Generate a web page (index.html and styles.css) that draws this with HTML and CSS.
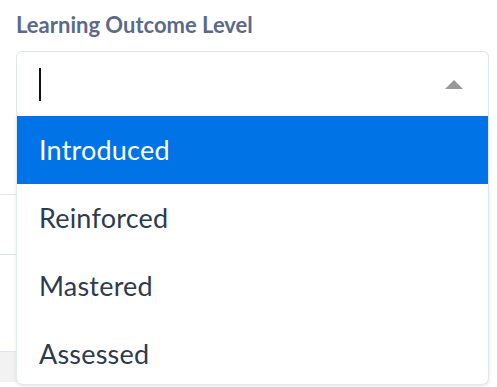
FILE: index.html
```html
<!DOCTYPE html>
<html>
<head>
<meta charset="utf-8">
<link rel="stylesheet" href="styles.css">
</head>
<body>
<div class="field">
  <div class="label">Learning Outcome Level</div>
  <div class="select">
    <div class="control">
      <span class="cursor"></span>
      <span class="arrow"></span>
    </div>
    <ul class="menu">
      <li class="option active">Introduced</li>
      <li class="option">Reinforced</li>
      <li class="option">Mastered</li>
      <li class="option">Assessed</li>
    </ul>
  </div>
</div>
<div class="under">
  <div class="row r1"></div>
  <div class="row r2"></div>
  <div class="row r3"></div>
  <div class="rest"></div>
</div>
</body>
</html>
```
FILE: styles.css
```css
html, body {
  margin: 0;
  padding: 0;
  background: #ffffff;
  font-family: Lato, "Noto Sans", sans-serif;
  overflow: hidden;
  height: 387px;
}
.field {
  padding: 12px 8px 0 16px;
}
.label {
  font-size: 22px;
  font-weight: 700;
  color: #5b6a8b;
  line-height: 26px;
  margin-bottom: 13px;
}
.select {
  position: relative;
}
.control {
  height: 65px;
  border: 1px solid #dfe5ef;
  border-bottom: none;
  border-radius: 6px 6px 0 0;
  display: flex;
  align-items: center;
  justify-content: space-between;
  padding: 0 25px 0 22px;
  box-sizing: border-box;
  background: #fff;
}
.cursor {
  width: 2px;
  height: 33px;
  background: #111;
}
.arrow {
  width: 0;
  height: 0;
  border-left: 9px solid transparent;
  border-right: 9px solid transparent;
  border-bottom: 9px solid #999;
}
.menu {
  position: absolute;
  top: 100%;
  left: 0;
  right: 0;
  margin: 0;
  padding: 0;
  list-style: none;
  background: #fff;
  border: 1px solid #e3e7ee;
  border-top: none;
  border-radius: 0 0 7px 7px;
  box-shadow: 0 2px 4px rgba(0,0,0,0.08);
  z-index: 2;
}
.option {
  height: 68px;
  line-height: 68px;
  padding: 0 22px;
  font-size: 27px;
  letter-spacing: 0.2px;
  color: #2e3b4e;
}
.option:last-child {
  height: 64px;
}
.option.active {
  background: #0073e6;
  color: #ffffff;
}
.under {
  width: 300px;
}
.r1 { height: 78px; border-bottom: 1px solid #dde6f0; }
.r2 { height: 59px; border-bottom: 1px solid #dde6f0; }
.r3 { height: 96px; border-bottom: 1px solid #dde6f0; }
.rest { height: 30px; background: #f2f2f2; }
```
